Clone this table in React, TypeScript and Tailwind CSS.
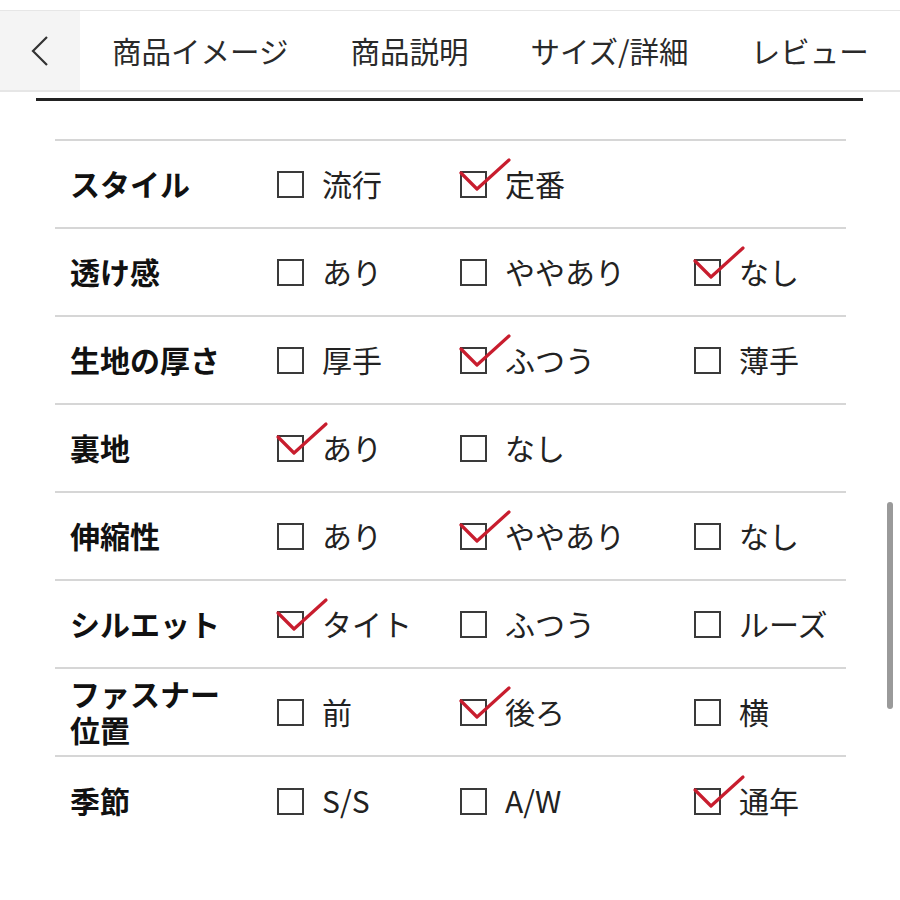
import React from 'react';

type Opt = { label: string; checked?: boolean };
type Row = { title: string[]; options: Opt[] };

const rows: Row[] = [
  { title: ['スタイル'], options: [{ label: '流行' }, { label: '定番', checked: true }] },
  { title: ['透け感'], options: [{ label: 'あり' }, { label: 'ややあり' }, { label: 'なし', checked: true }] },
  { title: ['生地の厚さ'], options: [{ label: '厚手' }, { label: 'ふつう', checked: true }, { label: '薄手' }] },
  { title: ['裏地'], options: [{ label: 'あり', checked: true }, { label: 'なし' }] },
  { title: ['伸縮性'], options: [{ label: 'あり' }, { label: 'ややあり', checked: true }, { label: 'なし' }] },
  { title: ['シルエット'], options: [{ label: 'タイト', checked: true }, { label: 'ふつう' }, { label: 'ルーズ' }] },
  { title: ['ファスナー', '位置'], options: [{ label: '前' }, { label: '後ろ', checked: true }, { label: '横' }] },
  { title: ['季節'], options: [{ label: 'S/S' }, { label: 'A/W' }, { label: '通年', checked: true }] },
];

const tabs = ['商品イメージ', '商品説明', 'サイズ/詳細', 'レビュー'];

const Box = ({ checked }: { checked?: boolean }) => (
  <span className="relative inline-block w-[27px] h-[27px] border-2 border-[#3a3a3a] shrink-0">
    {checked && (
      <svg
        className="absolute left-[-4px] top-[-16px] overflow-visible"
        width="54"
        height="40"
        viewBox="0 0 54 40"
      >
        <path d="M3 16 L19 32 L51 3" fill="none" stroke="#c81d2e" strokeWidth="3.2" strokeLinecap="round" strokeLinejoin="round" />
      </svg>
    )}
  </span>
);

const Option = ({ opt }: { opt: Opt }) => (
  <div className="flex items-center">
    <Box checked={opt.checked} />
    <span className="ml-[18px] -mt-[3px] text-[30px] text-[#222] leading-none">{opt.label}</span>
  </div>
);

export default function App() {
  return (
    <div
      className="relative w-[900px] h-[900px] bg-white overflow-hidden"
      style={{ fontFamily: '"Noto Sans CJK JP", "Noto Sans", sans-serif' }}
    >
      <div className="h-[10px]" />
      {/* tab bar */}
      <div className="flex items-stretch h-[82px] border-t border-b-2 border-[#e6e6e6]">
        <div className="w-[80px] bg-[#f4f4f4] flex items-center justify-center">
          <svg width="22" height="32" viewBox="0 0 22 32">
            <path d="M18 2 L4 16 L18 30" fill="none" stroke="#333" strokeWidth="2.2" />
          </svg>
        </div>
        <div className="flex items-center gap-[62px] pl-[32px] whitespace-nowrap">
          {tabs.map((t) => (
            <span key={t} className="text-[29.5px] text-[#2a2a2a] leading-none">
              {t}
            </span>
          ))}
        </div>
      </div>
      <div className="mt-[6px] ml-[36px] w-[827px] h-[3px] bg-[#222]" />

      {/* spec table */}
      <div className="mt-[38px] ml-[55px] w-[791px] border-t-2 border-[#d6d6d6]">
        {rows.map((r, i) => (
          <div
            key={i}
            className={`grid grid-cols-[222px_183px_234px_1fr] items-center h-[88px] ${
              i < rows.length - 1 ? 'border-b-2 border-[#d6d6d6]' : ''
            }`}
          >
            <div className="pl-[15px] -mt-[2px] text-[30px] font-bold text-[#111] leading-[36px]">
              {r.title.map((l) => (
                <div key={l}>{l}</div>
              ))}
            </div>
            {r.options.map((o) => (
              <Option key={o.label} opt={o} />
            ))}
          </div>
        ))}
      </div>

      {/* scrollbar */}
      <div className="absolute left-[887px] top-[502px] w-[6px] h-[207px] rounded-full bg-[#9a9a9a]" />
    </div>
  );
}
